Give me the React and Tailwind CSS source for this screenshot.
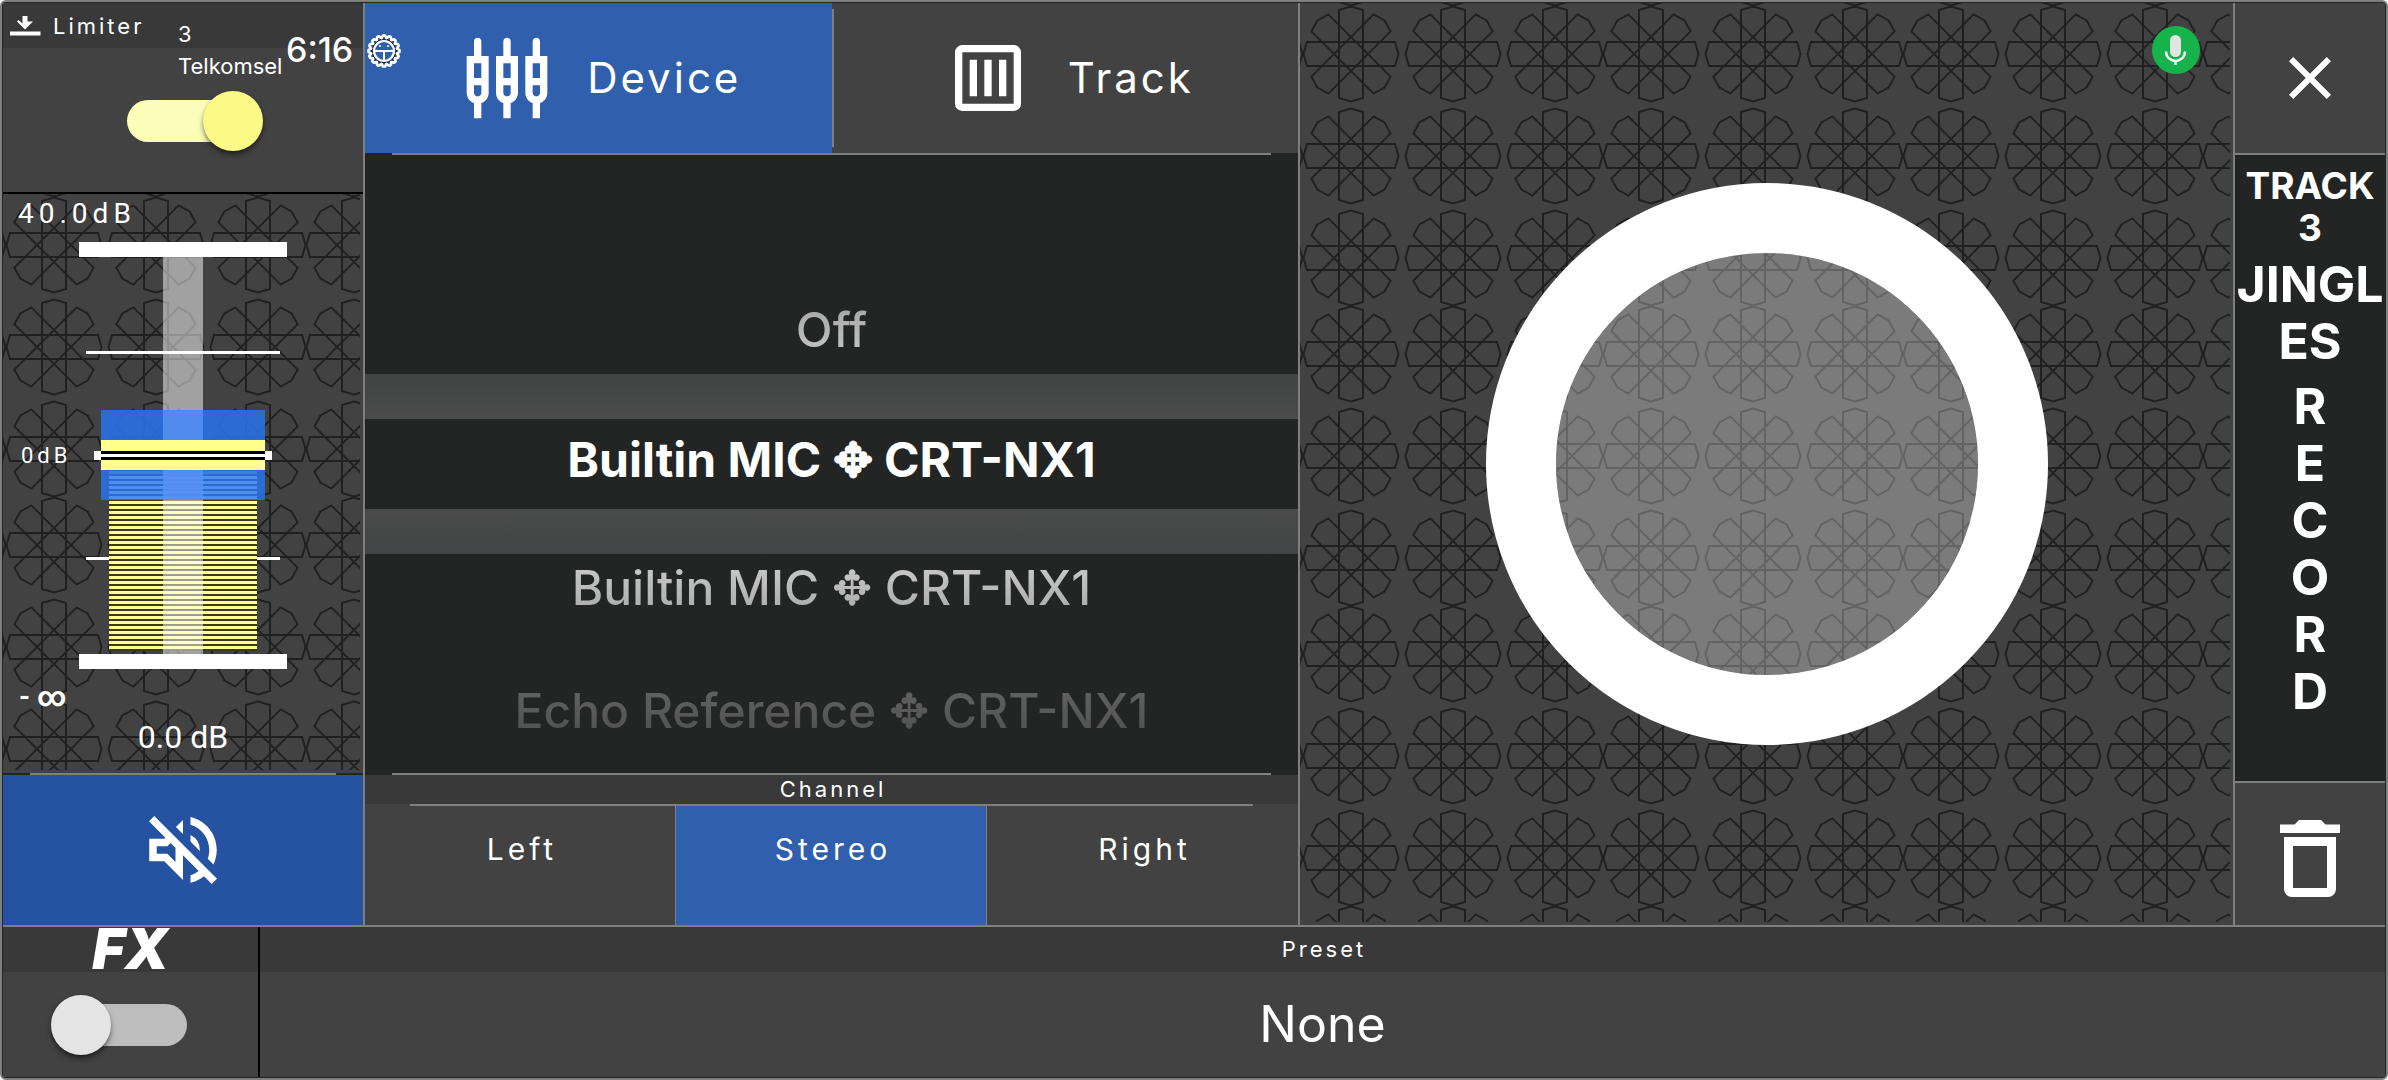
// src/App.jsx
import React, { useState } from "react";
import { MdClose, MdOutlineSettingsInputComponent, MdOutlineVolumeOff } from "react-icons/md";

const DEVICES = [
  { id: "builtin-1", label: "Builtin MIC ✥ CRT-NX1", style: "h-[67px] from-[#d0d0d0] to-[#a6a6a6]" },
  { id: "echo", label: "Echo Reference ✥ CRT-NX1", style: "mt-7 h-[124px] from-[#707070] to-[#444444]" },
];

const CHANNELS = ["Left", "Stereo", "Right"];

// One rosette: four capped bars turned in steps of 45 degrees
function Rosette({ x, y }) {
  return (
    <g transform={`translate(${x} ${y})`}>
      {[0, 45, 90, 135].map((angle) => (
        <path
          key={angle}
          transform={`rotate(${angle})`}
          d="M-12-44 0-47.500 12-44V44L0 47.500-12 44Z"
        />
      ))}
    </g>
  );
}

function PatternBackground({ id }) {
  const centers = [51, 153, 255];
  return (
    <svg className="absolute inset-0 h-full w-full pr-[3px] pb-[3px]" aria-hidden="true">
      <defs>
        <pattern id={id} width="300" height="300" patternUnits="userSpaceOnUse">
          <g fill="none" stroke="#202020" strokeWidth="2">
            {[-45, ...centers].map((y) =>
              [-45, ...centers, 351].map((x) => <Rosette key={`${x}-${y}`} x={x} y={y} />)
            )}
          </g>
        </pattern>
      </defs>
      <rect width="100%" height="100%" fill={`url(#${id})`} />
    </svg>
  );
}

function LimiterIcon() {
  return (
    <svg className="h-5 w-8" viewBox="0 0 32 20" fill="#fff" aria-hidden="true">
      <path d="M13.500 0h5v5.500h5.500L16 13.500 8 5.500l1.500-1.500 4 3.500z" />
      <path d="M1 15.500h30.500v4H1z" />
    </svg>
  );
}

function TrackIcon() {
  return (
    <svg className="size-[88px]" viewBox="0 0 24 24" fill="#fff" aria-hidden="true">
      <path
        fillRule="evenodd"
        d="M5 3h14a2 2 0 0 1 2 2v14a2 2 0 0 1-2 2H5a2 2 0 0 1-2-2V5a2 2 0 0 1 2-2zM5 5v14h14V5z"
      />
      <path d="M7 7h2v10H7zM11 7h2v10h-2zM15 7h2v10h-2z" />
    </svg>
  );
}

function TrashIcon() {
  return (
    <svg className="h-[77px] w-[60px]" viewBox="0 0 60 77" fill="#fff" aria-hidden="true">
      <path d="M19 0h22l4.500 4.500H60V13H0V4.500h14.500z" />
      <path
        fillRule="evenodd"
        d="M4 17h52v52a8 8 0 0 1-8 8H12a8 8 0 0 1-8-8zM13 26v42h34V26z"
      />
    </svg>
  );
}

function GearIcon() {
  const teeth = Array.from({ length: 16 }, (_, i) => i * 22.5);
  return (
    <svg className="size-[34px]" viewBox="-17 -17 34 34" aria-hidden="true">
      <circle r="12.500" fill="#1d2a3d" />
      {teeth.map((a) => (
        <path
          key={a}
          transform={`rotate(${a})`}
          d="M-2.500-13 -1-15.500h2L2.500-13"
          fill="none"
          stroke="#fff"
          strokeWidth="2.600"
          strokeLinejoin="round"
          strokeLinecap="round"
        />
      ))}
      <circle r="10" fill="#305fae" stroke="#fff" strokeWidth="2.200" />
      <path d="M-9.500 0h19M0 0v9.500" stroke="#fff" strokeWidth="2" />
      <circle cx="-4" cy="-5" r="1" fill="#fff" />
      <circle cx="4" cy="-5" r="1" fill="#fff" />
    </svg>
  );
}

function MicIcon() {
  return (
    <svg className="h-8 w-6" viewBox="0 0 24 32" aria-hidden="true">
      <rect x="6" y="1" width="11" height="22" rx="5.500" fill="#dfe5e0" />
      <path d="M2 17.500a9.500 9.500 0 0 0 19 0M11.500 27v4" fill="none" stroke="#fff" strokeWidth="2.400" />
    </svg>
  );
}

function Toggle({ label, checked, onChange, on }) {
  return (
    <input
      type="checkbox"
      role="switch"
      aria-label={label}
      checked={checked}
      onChange={onChange}
      className={`relative h-[42px] w-28 appearance-none rounded-full before:absolute before:-top-[9px] before:size-[60px] before:rounded-full before:shadow-md before:shadow-black/50 ${
        on ? "bg-[#fdfdba] before:left-[76px] before:bg-[#fbfa86]" : "bg-[#bdbdbd] before:-left-6 before:bg-[#e4e4e4]"
      }`}
    />
  );
}

function Fader() {
  const stripes = Array.from({ length: 36 }, (_, i) => 229 + i * 5);
  return (
    <div className="relative h-[427px] w-52">
      <svg className="h-full w-full" viewBox="0 0 208 427" aria-hidden="true">
        <path d="M7 109h194v3H7zM7 315h194v3H7z" fill="#fff" />
        <path d="M30 229h148v180H30z" fill="#3b3a12" />
        {stripes.map((y) => (
          <rect key={y} x="30" y={y} width="148" height="3" fill="#ffff99" />
        ))}
        <path d="M22 168h164v90H22z" fill="#2a70e4" fillOpacity=".9" />
        {stripes.slice(1, 6).map((y) => (
          <rect key={y} x="30" y={y} width="148" height="3" fill="#4f90ec" />
        ))}
        <path d="M84 15h40v397H84z" fill="#fff" fillOpacity=".5" />
        <path d="M84 168h40v90H84z" fill="#3b7df0" fillOpacity=".75" />
        <path d="M15 209h178v9H15z" fill="#fff" />
        <path d="M22 198h164v30H22z" fill="#ffff8c" />
        <path d="M22 209h164v9H22z" fill="#000" />
        <path d="M22 212h164v3H22z" fill="#fff" />
        <path d="M0 0h208v15H0zM0 412h208v15H0z" fill="#fff" />
      </svg>
      <input
        type="range"
        aria-label="Volume in decibels"
        min="-40"
        max="40"
        defaultValue="0"
        className="absolute inset-0 h-full w-full opacity-0 [direction:rtl] [writing-mode:vertical-lr]"
      />
    </div>
  );
}

export default function App() {
  const [limiter, setLimiter] = useState(true);
  const [fx, setFx] = useState(false);
  const [channel, setChannel] = useState("Stereo");

  return (
    <div className="relative flex min-h-screen flex-col rounded-md border-2 border-[#7d807f] bg-[#232524] font-['Inter',sans-serif] text-white">
      <div className="flex flex-1 flex-col p-px">
        {/* The gaps let the grey background through as divider lines */}
        <div className="grid flex-1 grid-cols-[360px_1fr_1fr_150px] gap-x-0.5 border-b-2 border-[#7d807f] bg-[#7d807f]">
          {/* Limiter, fader and mute */}
          <section className="flex flex-col bg-[#232524]">
            <div className="flex h-[191px] flex-col border-b-2 border-black bg-[#424242]">
              <div className="flex h-[45px] items-center gap-3 bg-[#393939] pl-[6px]">
                <LimiterIcon />
                <span className="text-[22px] leading-7 tracking-[3px]">Limiter</span>
              </div>
              <div className="flex flex-1 justify-center pt-13">
                <Toggle label="Limiter" checked={limiter} onChange={() => setLimiter(!limiter)} on={limiter} />
              </div>
            </div>

            <div className="relative flex-1 bg-[#424242] font-['Roboto',sans-serif]">
              <PatternBackground id="rosettes-left" />
              <div className="relative flex flex-col">
                <span className="h-12 pt-1 pl-[15px] text-[28px] leading-8 tracking-[5px]">40.0dB</span>
                <div className="grid grid-cols-[76px_208px_76px] items-center">
                  <span className="pl-[18px] text-[22px] leading-7 tracking-[4px]">0dB</span>
                  <Fader />
                </div>
                <span className="h-14 pt-2 pl-4 text-[28px] leading-10 font-bold">- ∞</span>
                <span className="-mt-2 text-center text-[32px] leading-10">0.0 dB</span>
              </div>
            </div>

            <div className="flex h-0.5 justify-center">
              <div className="w-[306px] bg-[#7d807f]" />
            </div>
            <button aria-label="Mute" className="flex h-[150px] items-center justify-center bg-[#2553a1]">
              <MdOutlineVolumeOff className="size-[90px]" />
            </button>
          </section>

          {/* Input source */}
          <section className="flex flex-col bg-[#232524]">
            <div className="grid h-[150px] grid-cols-2 bg-[#424242]">
              <button className="flex items-center justify-center gap-9 bg-[#305fae] pl-2">
                <MdOutlineSettingsInputComponent className="size-[88px]" />
                <span className="text-[42px] leading-12 tracking-[3px]">Device</span>
              </button>
              <button className="relative flex items-center justify-center gap-9 pl-2">
                <div className="absolute inset-y-[6px] left-0 w-0.5 bg-[#7d807f]" />
                <TrackIcon />
                <span className="text-[42px] leading-12 tracking-[3px]">Track</span>
              </button>
            </div>
            <div className="h-0.5 px-[27px]">
              <div className="h-full bg-[#7d807f]" />
            </div>

            <div
              role="listbox"
              aria-label="Input device"
              className="flex flex-1 flex-col text-[48px] leading-16 font-medium"
            >
              <button
                role="option"
                aria-selected="false"
                className="mt-[131px] flex h-[88px] flex-1 items-center justify-center bg-linear-to-b from-[#9a9a9a] to-[#d2d2d2] bg-clip-text text-transparent"
              >
                Off
              </button>
              <div className="h-[45px] bg-linear-to-b from-[#424444] to-[#4a4b4a]" />
              <button
                role="option"
                aria-selected="true"
                className="flex h-[90px] items-center justify-center pb-2 font-bold"
              >
                Builtin MIC ✥ CRT-NX1
              </button>
              <div className="h-[45px] bg-linear-to-b from-[#4a4b4a] to-[#424545]" />
              {DEVICES.map((d) => (
                <button
                  key={d.id}
                  role="option"
                  aria-selected="false"
                  className={`flex items-center justify-center bg-linear-to-b bg-clip-text text-transparent ${d.style}`}
                >
                  {d.label}
                </button>
              ))}
            </div>

            <div className="h-0.5 px-[27px]">
              <div className="h-full bg-[#7d807f]" />
            </div>
            <div className="flex h-[29px] items-center justify-center bg-[#393939] pl-[3px] text-[22px] tracking-[3px]">
              Channel
            </div>
            <div className="h-0.5 bg-[#424242] px-[45px]">
              <div className="h-full bg-[#7d807f]" />
            </div>
            <div className="grid h-[119px] grid-cols-3 divide-x divide-[#7d807f] bg-[#424242]">
              {CHANNELS.map((name) => (
                <button
                  key={name}
                  onClick={() => setChannel(name)}
                  className={`pb-8 pl-1 text-[30px] tracking-[4px] ${channel === name ? "bg-[#305fae]" : ""}`}
                >
                  {name}
                </button>
              ))}
            </div>
          </section>

          {/* Record button */}
          <section className="relative flex items-center justify-center bg-[#424242]">
            <PatternBackground id="rosettes-right" />
            <button
              aria-label="Record"
              className="relative size-[562px] rounded-full border-[70px] border-white bg-white/30 bg-clip-padding"
            />
          </section>

          {/* Track name */}
          <aside className="flex flex-col bg-[#232524] font-bold">
            <button
              aria-label="Close"
              className="flex h-[152px] items-center justify-center border-b-2 border-[#7d807f] bg-[#424242]"
            >
              <MdClose className="size-[72px]" />
            </button>
            <div className="flex flex-1 flex-col items-center pt-[10px] text-[50px] leading-[57px]">
              <div className="flex flex-col items-center text-[37px] leading-[42px]">
                <span>TRACK</span>
                <span>3</span>
              </div>
              <div className="flex flex-col items-center pt-[7px]">
                <span>JINGL</span>
                <span>ES</span>
              </div>
              <div className="flex flex-col items-center pt-2">
                {["R", "E", "C", "O", "R", "D"].map((letter, i) => (
                  <span key={i}>{letter}</span>
                ))}
              </div>
            </div>
            <button
              aria-label="Delete"
              className="flex h-36 items-center justify-center border-t-2 border-[#7d807f] bg-[#424242] pt-2"
            >
              <TrashIcon />
            </button>
          </aside>
        </div>

        {/* Effects */}
        <footer className="grid h-[150px] grid-cols-[257px_1fr] bg-[#424242]">
          <section className="flex flex-col border-r-2 border-black">
            <div className="flex h-[45px] items-center justify-center bg-[#393939] text-[56px] leading-[45px] font-black italic">
              FX
            </div>
            <div className="flex flex-1 items-center justify-center">
              <Toggle label="FX" checked={fx} onChange={() => setFx(!fx)} on={fx} />
            </div>
          </section>
          <section className="flex flex-col">
            <div className="flex h-[45px] items-center justify-center bg-[#393939] pl-[3px] text-[22px] tracking-[3px]">
              Preset
            </div>
            <button className="flex-1 text-[50px]">None</button>
          </section>
        </footer>
      </div>

      {/* System status bar */}
      <div className="pointer-events-none absolute inset-x-0 top-4 flex items-start pl-44">
        <div className="w-[108px] text-[22px] leading-8">
          <div>3</div>
          <div>Telkomsel</div>
        </div>
        <div className="w-[81px] pt-3 text-[34px] leading-10 font-medium">6:16</div>
        <div className="pt-4">
          <GearIcon />
        </div>
      </div>
      <div className="absolute top-6 right-[186px] flex size-12 items-center justify-center rounded-full bg-[#16b24b]">
        <MicIcon />
      </div>
    </div>
  );
}
